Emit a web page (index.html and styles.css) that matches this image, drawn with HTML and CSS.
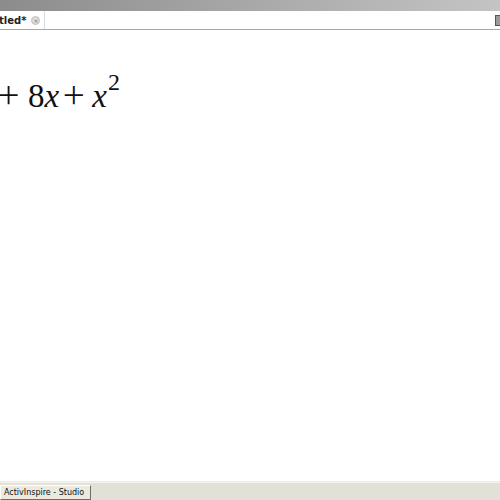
FILE: index.html
```html
<!DOCTYPE html>
<html>
<head>
<meta charset="utf-8">
<link rel="stylesheet" href="styles.css">
</head>
<body>
<div class="app">
  <div class="titlebar"></div>
  <div class="tabrow">
    <div class="tab"><span class="tabtext">tled*</span><span class="close">×</span></div>
    <div class="spacer"></div>
    <div class="rightbtn"></div>
  </div>
  <div class="canvas">
    <div class="eq"><span class="op op1">+</span><span class="num">8</span><span class="var">x</span><span class="op op2">+</span><span class="var">x</span><span class="sup">2</span></div>
  </div>
  <div class="taskbar">
    <div class="taskbtn">ActivInspire - Studio</div>
  </div>
</div>
</body>
</html>
```
FILE: styles.css
```css
html, body { margin: 0; padding: 0; }
body { width: 500px; height: 500px; overflow: hidden; background: #fff; }
.app { display: flex; flex-direction: column; height: 500px; }
.titlebar { height: 11px; background: linear-gradient(to right, #8c8c8c, #a8a8a8 50%, #c4c4c4); flex: none; }
.tabrow { height: 18px; display: flex; align-items: center; border-bottom: 1px solid #9aaac0; background: #fff; flex: none; }
.tab { display: flex; align-items: center; height: 18px; padding-right: 4px; border-right: 1px solid #d8dde6; }
.tabtext { font-family: Tahoma, "DejaVu Sans", sans-serif; font-weight: bold; font-size: 10px; color: #222; margin-left: -1px; }
.close { width: 7px; height: 7px; border-radius: 50%; background: #dcdcdc; border: 1px solid #c0c0c0; font-family: "DejaVu Sans", sans-serif; font-size: 6px; line-height: 7px; text-align: center; color: #777; margin-left: 5px; }
.spacer { flex: 1; }
.rightbtn { width: 4px; height: 9px; border: 1px solid #555; border-right: none; background: #9a9a9a; margin-top: 1px; }
.canvas { flex: 1; background: #fff; border-bottom: 1px solid #ecebe5; }
.eq { font-family: "Liberation Serif", "Times New Roman", serif; font-size: 33px; line-height: 40px; margin-top: 46px; color: #111; white-space: nowrap; }
.op { font-family: Inter, "DejaVu Sans", sans-serif; font-weight: 200; font-size: 42px; line-height: 0; display: inline-block; position: relative; top: 0px; }
.op1 { margin-left: -5px; margin-right: 6px; }
.op2 { margin-left: 1px; margin-right: 5px; }
.var { font-style: italic; }
.sup { font-size: 24px; line-height: 0; position: relative; top: -17px; margin-left: 1px; }
.taskbar { height: 17px; background: #e2e0d7; display: flex; align-items: center; flex: none; border-top: 1px solid #f4f3ee; }
.taskbtn { width: 86px; height: 13px; margin-top: 1px; background: #ece9df; border: 1px solid #fff; border-right-color: #6e6e6e; border-bottom-color: #6e6e6e; font-family: Tahoma, "DejaVu Sans", sans-serif; font-size: 8px; line-height: 13px; padding-left: 3px; color: #111; }
```
